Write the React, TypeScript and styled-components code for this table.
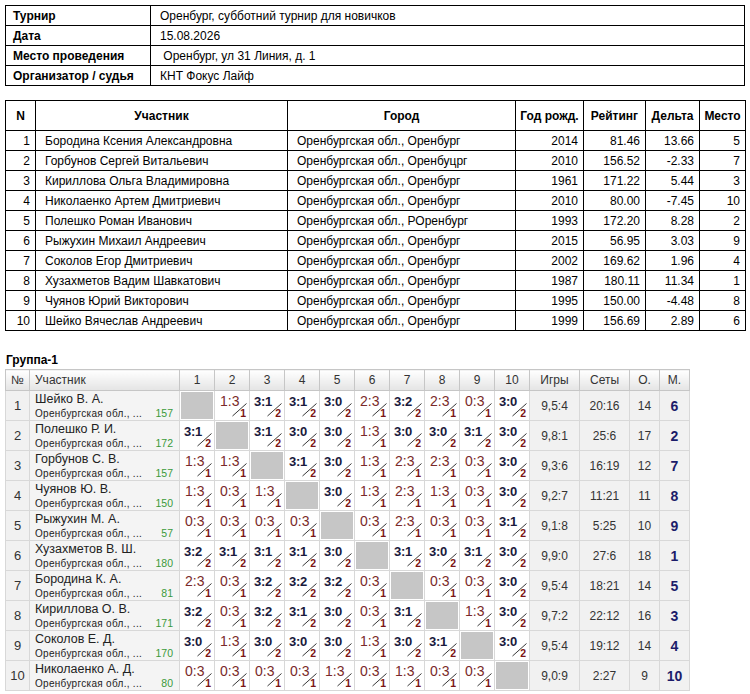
import React from 'react'
import styled, { createGlobalStyle } from 'styled-components'

const GlobalStyle = createGlobalStyle`
  body {
    margin: 0;
    background: #fff;
    font-family: "Liberation Sans", Arial, sans-serif;
  }
`

const info = [
    ['Турнир', 'Оренбург, субботний турнир для новичков'],
    ['Дата', '15.08.2026'],
    ['Место проведения', '\u00a0Оренбург, ул 31 Линия, д. 1'],
    ['Организатор / судья', 'КНТ Фокус Лайф'],
]

const players = [
    ['Бородина Ксения Александровна', 'Оренбургская обл., Оренбург', '2014', '81.46', '13.66', '5'],
    ['Горбунов Сергей Витальевич', 'Оренбургская обл., Оренбуцрг', '2010', '156.52', '-2.33', '7'],
    ['Кириллова Ольга Владимировна', 'Оренбургская обл., Оренбург', '1961', '171.22', '5.44', '3'],
    ['Николаенко Артем Дмитриевич', 'Оренбургская обл., Оренбург', '2010', '80.00', '-7.45', '10'],
    ['Полешко Роман Иванович', 'Оренбургская обл., РОренбург', '1993', '172.20', '8.28', '2'],
    ['Рыжухин Михаил Андреевич', 'Оренбургская обл., Оренбург', '2015', '56.95', '3.03', '9'],
    ['Соколов Егор Дмитриевич', 'Оренбургская обл., Оренбург', '2002', '169.62', '1.96', '4'],
    ['Хузахметов Вадим Шавкатович', 'Оренбургская обл., Оренбург', '1987', '180.11', '11.34', '1'],
    ['Чуянов Юрий Викторович', 'Оренбургская обл., Оренбург', '1995', '150.00', '-4.48', '8'],
    ['Шейко Вячеслав Андреевич', 'Оренбургская обл., Оренбург', '1999', '156.69', '2.89', '6'],
]

type GroupRow = {
    name: string
    rating: string
    scores: string
    games: string
    sets: string
    points: string
    place: string
}

// scores: space separated, "x" marks the diagonal cell
const group: GroupRow[] = [
    { name: 'Шейко В. А.', rating: '157', scores: 'x 1:3 3:1 3:1 3:0 2:3 3:2 2:3 0:3 3:0', games: '9,5:4', sets: '20:16', points: '14', place: '6' },
    { name: 'Полешко Р. И.', rating: '172', scores: '3:1 x 3:1 3:0 3:0 1:3 3:0 3:0 3:1 3:0', games: '9,8:1', sets: '25:6', points: '17', place: '2' },
    { name: 'Горбунов С. В.', rating: '157', scores: '1:3 1:3 x 3:1 3:0 1:3 2:3 2:3 0:3 3:0', games: '9,3:6', sets: '16:19', points: '12', place: '7' },
    { name: 'Чуянов Ю. В.', rating: '150', scores: '1:3 0:3 1:3 x 3:0 1:3 2:3 1:3 0:3 3:0', games: '9,2:7', sets: '11:21', points: '11', place: '8' },
    { name: 'Рыжухин М. А.', rating: '57', scores: '0:3 0:3 0:3 0:3 x 0:3 2:3 0:3 0:3 3:1', games: '9,1:8', sets: '5:25', points: '10', place: '9' },
    { name: 'Хузахметов В. Ш.', rating: '180', scores: '3:2 3:1 3:1 3:1 3:0 x 3:1 3:0 3:1 3:0', games: '9,9:0', sets: '27:6', points: '18', place: '1' },
    { name: 'Бородина К. А.', rating: '81', scores: '2:3 0:3 3:2 3:2 3:2 0:3 x 0:3 0:3 3:0', games: '9,5:4', sets: '18:21', points: '14', place: '5' },
    { name: 'Кириллова О. В.', rating: '171', scores: '3:2 0:3 3:2 3:1 3:0 0:3 3:1 x 1:3 3:0', games: '9,7:2', sets: '22:12', points: '16', place: '3' },
    { name: 'Соколов Е. Д.', rating: '170', scores: '3:0 1:3 3:0 3:0 3:0 1:3 3:0 3:1 x 3:0', games: '9,5:4', sets: '19:12', points: '14', place: '4' },
    { name: 'Николаенко А. Д.', rating: '80', scores: '0:3 0:3 0:3 0:3 1:3 0:3 1:3 0:3 0:3 x', games: '9,0:9', sets: '2:27', points: '9', place: '10' },
]

export default function App() {
    return (
        <Page>
            <GlobalStyle />
            <InfoTable>
                <tbody>
                    {info.map(([label, value]) => (
                        <tr key={label}>
                            <InfoLabel>{label}</InfoLabel>
                            <InfoValue>{value}</InfoValue>
                        </tr>
                    ))}
                </tbody>
            </InfoTable>

            <PlayersTable>
                <colgroup>
                    <col style={{ width: 30 }} />
                    <col style={{ width: 252 }} />
                    <col style={{ width: 228 }} />
                    <col style={{ width: 68 }} />
                    <col style={{ width: 62 }} />
                    <col style={{ width: 54 }} />
                    <col style={{ width: 46 }} />
                </colgroup>
                <thead>
                    <tr>
                        <PHead>N</PHead>
                        <PHead>Участник</PHead>
                        <PHead>Город</PHead>
                        <PHead>Год рожд.</PHead>
                        <PHead>Рейтинг</PHead>
                        <PHead>Дельта</PHead>
                        <PHead>Место</PHead>
                    </tr>
                </thead>
                <tbody>
                    {players.map((p, i) => (
                        <tr key={p[0]}>
                            <PCell $num>{i + 1}</PCell>
                            <PCell>{p[0]}</PCell>
                            <PCell>{p[1]}</PCell>
                            <PCell $num>{p[2]}</PCell>
                            <PCell $num>{p[3]}</PCell>
                            <PCell $num>{p[4]}</PCell>
                            <PCell $num>{p[5]}</PCell>
                        </tr>
                    ))}
                </tbody>
            </PlayersTable>

            <GroupTitle>Группа-1</GroupTitle>
            <GroupTable>
                <colgroup>
                    <col style={{ width: 24 }} />
                    <col style={{ width: 150 }} />
                    {group.map((_, i) => <col key={i} style={{ width: 35 }} />)}
                    <col style={{ width: 50 }} />
                    <col style={{ width: 50 }} />
                    <col style={{ width: 30 }} />
                    <col style={{ width: 30 }} />
                </colgroup>
                <thead>
                    <tr>
                        <GHead>№</GHead>
                        <GHead $align="left">Участник</GHead>
                        {group.map((_, i) => <GHead key={i}>{i + 1}</GHead>)}
                        <GHead>Игры</GHead>
                        <GHead>Сеты</GHead>
                        <GHead>О.</GHead>
                        <GHead>М.</GHead>
                    </tr>
                </thead>
                <tbody>
                    {group.map((row, i) => (
                        <tr key={row.name}>
                            <NumCell>{i + 1}</NumCell>
                            <NameCell>
                                <Name>{row.name}</Name>
                                <SubLine>
                                    <City>Оренбургская обл., ...</City>
                                    <Rating>{row.rating}</Rating>
                                </SubLine>
                            </NameCell>
                            {row.scores.split(' ').map((s, j) =>
                                s === 'x' ? <SelfCell key={j} /> : <Score key={j} score={s} />
                            )}
                            <StatCell>{row.games}</StatCell>
                            <StatCell>{row.sets}</StatCell>
                            <StatCell>{row.points}</StatCell>
                            <PlaceCell>{row.place}</PlaceCell>
                        </tr>
                    ))}
                </tbody>
            </GroupTable>
        </Page>
    )
}

function Score({ score }: { score: string }) {
    const [a, b] = score.split(':').map(Number)
    const win = a > b
    return (
        <ScoreCell>
            <ScoreBox>
                <ScoreText $win={win}>{score}</ScoreText>
                <Slash width="35" height="30" viewBox="0 0 35 30">
                    <line x1="17.5" y1="25" x2="31.5" y2="12.5" stroke="#222" strokeWidth="0.9" />
                </Slash>
                <Pts>{win ? 2 : 1}</Pts>
            </ScoreBox>
        </ScoreCell>
    )
}

const Page = styled.div`
    padding: 5px;
    color: #000;
    font-size: 12px;
`

const InfoTable = styled.table`
    width: 740px;
    border-collapse: collapse;
    td {
        border: 1px solid #000;
        height: 19px;
        padding: 0;
        line-height: 18px;
        font-size: 12px;
    }
`

const InfoLabel = styled.td`
    width: 137px;
    padding-left: 7px !important;
    font-weight: bold;
`

const InfoValue = styled.td`
    padding-left: 9px !important;
`

const PlayersTable = styled.table`
    width: 740px;
    margin-top: 14px;
    border-collapse: collapse;
    table-layout: fixed;
`

const PHead = styled.th`
    border: 1px solid #000;
    height: 29px;
    padding: 0 2px;
    font-size: 12px;
    font-weight: bold;
    text-align: center;
    white-space: nowrap;
    overflow: hidden;
`

const PCell = styled.td<{ $num?: boolean }>`
    border: 1px solid #000;
    height: 19px;
    padding: 0 ${(p) => (p.$num ? '5px' : '4px')} 0 ${(p) => (p.$num ? '4px' : '9px')};
    font-size: 12px;
    text-align: ${(p) => (p.$num ? 'right' : 'left')};
    white-space: nowrap;
    overflow: hidden;
`

const GroupTitle = styled.h3`
    margin: 21px 0 0 1px;
    font-size: 12px;
    font-weight: bold;
    line-height: 16px;
`

const GroupTable = styled.table`
    width: 684px;
    margin-top: 1px;
    border-collapse: collapse;
    table-layout: fixed;
    border: 1px solid #b8b8b8;
    color: #333;
`

const GHead = styled.th<{ $align?: string }>`
    height: 20px;
    padding: 0 5px;
    border: 1px solid #c6c6c6;
    background: linear-gradient(#ffffff, #e4e4e4);
    font-size: 12px;
    font-weight: normal;
    color: #333;
    text-align: ${(p) => p.$align || 'center'};
`

const StatCell = styled.td`
    height: 29px;
    padding: 0;
    border: 1px solid #d8d8d8;
    background: #f1f1f1;
    text-align: center;
    font-size: 12px;
    color: #333;
`

const NumCell = styled(StatCell)`
    font-size: 13px;
`

const PlaceCell = styled(StatCell)`
    font-size: 14px;
    font-weight: bold;
    color: #1c1c6a;
`

const NameCell = styled.td`
    padding: 1px 6px 0 5px;
    border: 1px solid #d8d8d8;
    background: #f4f4f4;
    vertical-align: top;
`

const Name = styled.div`
    font-size: 12.5px;
    line-height: 15px;
    color: #222;
`

const SubLine = styled.div`
    display: flex;
    justify-content: space-between;
    align-items: baseline;
    line-height: 13px;
`

const City = styled.span`
    font-size: 10px;
    letter-spacing: 0.3px;
    color: #222;
`

const Rating = styled.span`
    font-size: 10.5px;
    color: #3a9a3a;
`

const SelfCell = styled.td`
    padding: 0;
    border: 1px solid #d8d8d8;
    background: #c6c6c6;
    box-shadow: inset 0 0 0 1px #fff;
`

const ScoreCell = styled.td`
    padding: 0;
    border: 1px solid #d8d8d8;
    background: #fff;
    vertical-align: top;
`

const ScoreBox = styled.div`
    position: relative;
    height: 29px;
`

const ScoreText = styled.div<{ $win: boolean }>`
    padding: 3px 0 0 ${(p) => (p.$win ? '4px' : '5px')};
    font-size: ${(p) => (p.$win ? '13px' : '14px')};
    font-weight: ${(p) => (p.$win ? 'bold' : 'normal')};
    line-height: 15px;
    color: ${(p) => (p.$win ? '#1a1a3c' : '#7a2a2a')};
    letter-spacing: ${(p) => (p.$win ? '-0.3px' : '0')};
`

const Slash = styled.svg`
    position: absolute;
    left: 0;
    top: 0;
`

const Pts = styled.span`
    position: absolute;
    right: 3px;
    bottom: 1px;
    font-size: 10.5px;
    font-weight: bold;
    line-height: 11px;
    color: #7a1414;
`
